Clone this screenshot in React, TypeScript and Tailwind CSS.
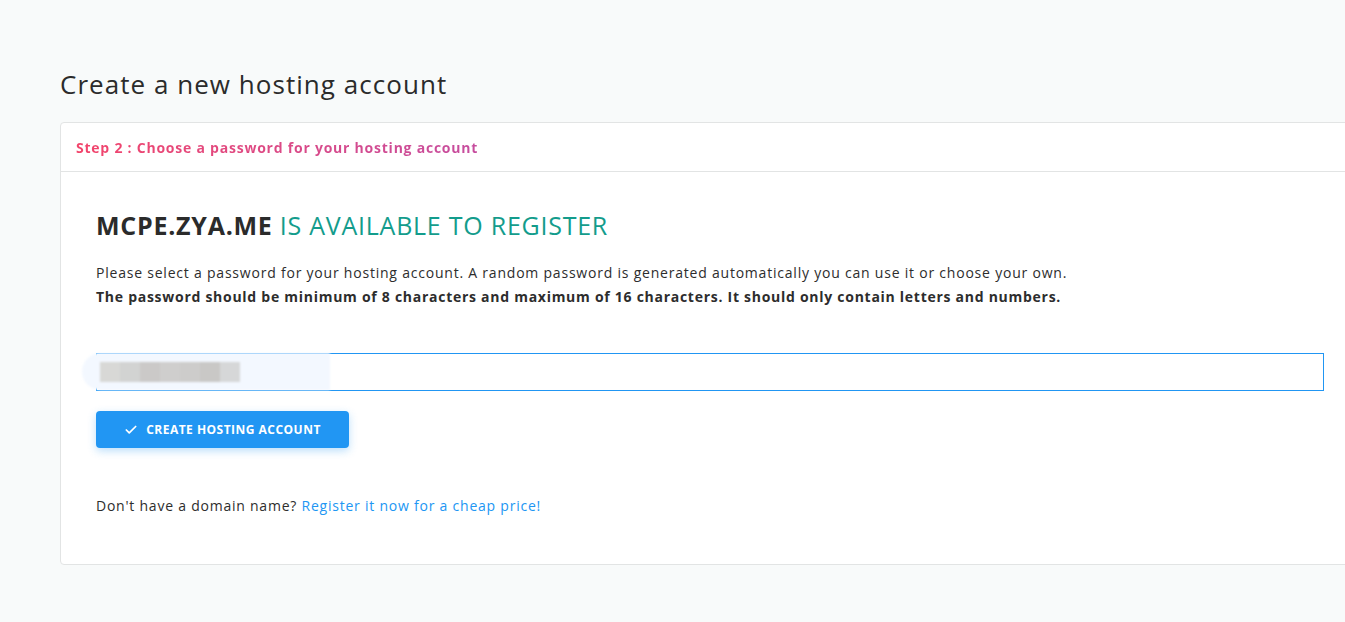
import { Check } from "lucide-react";

const blocks = ["#d8d8d6", "#d2d3d2", "#cbc9c8", "#cfcecd", "#cdcccb", "#c9c8c6", "#d6d7d8"];

export default function App() {
  return (
    <div className="min-h-[622px] overflow-hidden bg-[#f8fafa] pt-[65px] pl-[60px] font-['Open_Sans',sans-serif] text-[#2d2d2d]">
      <h1 className="text-[26px] leading-[38px] tracking-[0.04em] text-[#2b2b2b]">Create a new hosting account</h1>

      <div className="mt-[19px] w-[1300px] rounded-[4px] border border-[#e2e4e4] bg-white">
        <div className="flex h-[49px] items-center border-b border-[#e2e4e4] px-[15px]">
          <span className="bg-gradient-to-r from-[#f2436a] to-[#c64c9e] bg-clip-text text-[14px] font-bold tracking-[0.055em] text-transparent">
            Step 2 : Choose a password for your hosting account
          </span>
        </div>

        <div className="px-[35px] pt-[37px] pb-[46px]">
          <h2 className="text-[25px] leading-[32px] tracking-[0.03em] uppercase">
            <span className="font-bold text-[#2b2b2b]">mcpe.zya.me</span>{" "}
            <span className="text-[#139c8c]">is available to register</span>
          </h2>

          <p className="mt-[20px] text-[14px] leading-[24px] tracking-[0.056em]">
            Please select a password for your hosting account. A random password is generated automatically you can use it or choose your own.
            <br />
            <b className="tracking-[0.052em]">The password should be minimum of 8 characters and maximum of 16 characters. It should only contain letters and numbers.</b>
          </p>

          <div className="relative mt-[44px]">
            <input
              type="text"
              readOnly
              className="block h-[38px] w-full border border-[#2196f3] bg-white px-3 text-[14px] outline-none"
            />
            <div className="absolute top-0 left-[-14px] flex h-[37px] w-[248px] items-center rounded-l-full rounded-r-[40%] bg-[#f3f8ff] pl-[18px] blur-[1px]">
              <div className="flex h-[20px]">
                {blocks.map((c, i) => (
                  <div key={i} className="h-[20px] w-[20px]" style={{ backgroundColor: c }} />
                ))}
              </div>
            </div>
          </div>

          <button className="mt-[20px] flex h-[37px] w-[253px] items-center justify-center gap-[8px] rounded-[4px] bg-[#2196f3] text-[12px] font-bold tracking-[0.04em] text-white uppercase shadow-[0_3px_8px_rgba(33,150,243,0.3)]">
            <Check size={14} strokeWidth={3} />
            Create hosting account
          </button>

          <p className="mt-[46px] text-[14px] leading-[24px] tracking-[0.055em]">
            Don't have a domain name?{" "}
            <a href="#" className="text-[#2196f3]">
              Register it now for a cheap price!
            </a>
          </p>
        </div>
      </div>
    </div>
  );
}
